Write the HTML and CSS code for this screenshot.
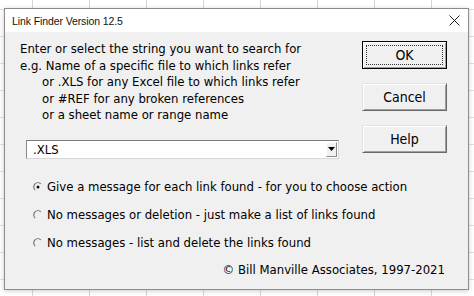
FILE: index.html
```html
<!DOCTYPE html>
<html>
<head>
<meta charset="utf-8">
<link rel="stylesheet" href="styles.css">
</head>
<body>
<div class="dialog">
  <div class="titlebar">
    <span class="title">Link Finder Version 12.5</span>
    <svg class="close" width="11" height="11" viewBox="0 0 11 11"><path d="M0.5 0.5 L10.5 10.5 M10.5 0.5 L0.5 10.5" stroke="#222" stroke-width="1" fill="none"/></svg>
  </div>
  <div class="content">
    <div class="top">
      <div class="left">
        <div class="instructions">
          <div>Enter or select the string you want to search for</div>
          <div>e.g. Name of a specific file to which links refer</div>
          <div class="indent">or .XLS for any Excel file to which links refer</div>
          <div class="indent">or #REF for any broken references</div>
          <div class="indent">or a sheet name or range name</div>
        </div>
        <div class="combo">
          <span class="combo-text">.XLS</span>
          <span class="combo-btn"><svg width="7" height="4" viewBox="0 0 7 4"><path d="M0 0 H7 L3.5 4 Z" fill="#000"/></svg></span>
        </div>
      </div>
      <div class="buttons">
        <div class="btn default"><span class="focus">OK</span></div>
        <div class="btn">Cancel</div>
        <div class="btn">Help</div>
      </div>
    </div>
    <div class="options">
      <div class="option">
        <svg class="radio" width="10" height="10" viewBox="0 0 10 10"><path d="M2.2 8.2 A4 4 0 0 1 7.8 1.8" stroke="#6f6f6f" stroke-width="1.1" fill="none"/><circle cx="5" cy="5" r="1.5" fill="#111"/></svg>
        <span>Give a message for each link found - for you to choose action</span>
      </div>
      <div class="option">
        <svg class="radio" width="10" height="10" viewBox="0 0 10 10"><path d="M2.2 8.2 A4 4 0 0 1 7.8 1.8" stroke="#6f6f6f" stroke-width="1.1" fill="none"/></svg>
        <span>No messages or deletion - just make a list of links found</span>
      </div>
      <div class="option">
        <svg class="radio" width="10" height="10" viewBox="0 0 10 10"><path d="M2.2 8.2 A4 4 0 0 1 7.8 1.8" stroke="#6f6f6f" stroke-width="1.1" fill="none"/></svg>
        <span>No messages - list and delete the links found</span>
      </div>
    </div>
    <div class="copyright">© Bill Manville Associates, 1997-2021</div>
  </div>
</div>
</body>
</html>
```
FILE: styles.css
```css
html, body {
  margin: 0;
  padding: 0;
}
body {
  width: 474px;
  height: 296px;
  overflow: hidden;
  background-color: #ffffff;
  background-image:
    linear-gradient(to right, #d6d6d6 1px, transparent 1px),
    linear-gradient(to bottom, #e0e0e0 1px, transparent 1px);
  background-size: 57px 100%, 100% 27px;
  background-position: 32px 0, 0 9px;
  font-family: "DejaVu Sans Condensed", "Liberation Sans", Arial, sans-serif;
  color: #000;
}
.dialog {
  margin: 8px 0 0 4px;
  width: 465px;
  height: 282px;
  box-sizing: border-box;
  border: 1px solid #8c8c8c;
  background: #f0f0f0;
  box-shadow: 0 1px 5px rgba(0,0,0,0.2);
  display: flex;
  flex-direction: column;
}
.titlebar {
  height: 23px;
  background: #ffffff;
  display: flex;
  align-items: center;
  justify-content: space-between;
  padding: 0 8px 0 7px;
}
.title {
  font-family: "Liberation Sans", Arial, sans-serif;
  font-size: 10.5px;
  letter-spacing: -0.1px;
  color: #111;
}
.close {
  display: block;
}
.content {
  padding: 9px 21px 0 15px;
  font-size: 13px;
}
.top {
  display: flex;
  justify-content: space-between;
  align-items: flex-start;
}
.instructions {
  line-height: 16.5px;
  white-space: nowrap;
}
.indent {
  padding-left: 22px;
}
.combo {
  margin: 16px 0 0 6px;
  width: 313px;
  height: 19px;
  box-sizing: border-box;
  background: #fff;
  border-top: 1px solid #7a7a7a;
  border-left: 1px solid #8a8a8a;
  border-right: 1px solid #d8d8d8;
  border-bottom: 1px solid #d8d8d8;
  display: flex;
  align-items: center;
  justify-content: space-between;
  padding: 0 1px 0 6px;
}
.combo-btn {
  width: 11px;
  height: 15px;
  box-sizing: border-box;
  background: #f0f0f0;
  border-top: 1px solid #fff;
  border-left: 1px solid #fff;
  border-right: 1px solid #8a8a8a;
  border-bottom: 1px solid #8a8a8a;
  display: flex;
  align-items: center;
  justify-content: center;
}
.combo-btn svg {
  display: block;
}
.buttons {
  display: flex;
  flex-direction: column;
  gap: 14px;
}
.btn {
  width: 85px;
  height: 28px;
  box-sizing: border-box;
  background: #f0f0f0;
  border-top: 1px solid #e3e3e3;
  border-left: 1px solid #e3e3e3;
  border-right: 1px solid #696969;
  border-bottom: 1px solid #696969;
  box-shadow: inset 1px 1px 0 #ffffff, inset -1px -1px 0 #a0a0a0;
  display: flex;
  align-items: center;
  justify-content: center;
  font-size: 14px;
}
.btn.default {
  border: 1px solid #000;
  padding: 3px;
}
.focus {
  flex: 1;
  align-self: stretch;
  display: flex;
  align-items: center;
  justify-content: center;
  outline: 1px dotted #333;
  outline-offset: -1px;
}
.options {
  margin-top: 14px;
}
.option {
  height: 28px;
  display: flex;
  align-items: center;
  white-space: nowrap;
}
.radio {
  display: block;
  margin: 0 4px 0 13px;
}
.copyright {
  height: 26px;
  display: flex;
  align-items: center;
  justify-content: flex-end;
  padding-right: 2px;
  white-space: nowrap;
}
```
